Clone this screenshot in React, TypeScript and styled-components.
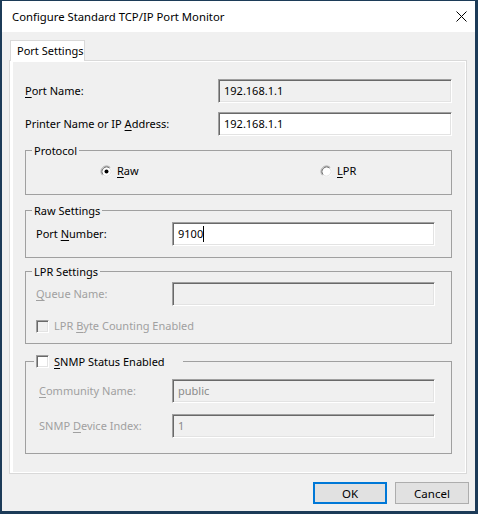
import styled, { createGlobalStyle } from "styled-components";

const GlobalStyle = createGlobalStyle`
  html, body {
    margin: 0;
    padding: 0;
    background: #1c3b58;
  }
  body {
    font-family: "Noto Sans", "Liberation Sans", sans-serif;
    font-size: 11px;
    color: #000;
  }
  * { box-sizing: border-box; }
`;

const Screen = styled.div`
  width: 478px;
  height: 514px;
  padding: 1px 3px 3px 2px;
  background: #1c3b58;
`;

const Window = styled.div`
  width: 100%;
  height: 100%;
  display: flex;
  flex-direction: column;
  background: #f0f0f0;
`;

const TitleBar = styled.div`
  height: 31px;
  flex: none;
  background: #fff;
  display: flex;
  align-items: center;
  justify-content: space-between;
  padding: 0 8px 0 10px;
`;

const Title = styled.span`
  font-size: 11.3px;
  line-height: 16px;
`;

const Client = styled.div`
  flex: 1;
  display: flex;
  flex-direction: column;
  padding: 8px 8px 0 7px;
`;

const TabStrip = styled.div`
  display: flex;
  height: 20px;
`;

const Tab = styled.div`
  position: relative;
  z-index: 1;
  width: 75px;
  height: 21px;
  margin-left: 1px;
  padding: 2px 0 0 6px;
  background: #fff;
  border: 1px solid #d9d9d9;
  border-bottom: none;
  line-height: 16px;
  white-space: nowrap;
`;

const Panel = styled.div`
  height: 414px;
  border: 1px solid #d9d9d9;
  background: #fff;
  padding: 1px 1px 1px 3px;
  display: flex;
`;

const Page = styled.div`
  flex: 1;
  background: #f0f0f0;
  padding: 17px 13px 0 12px;
  display: flex;
  flex-direction: column;
`;

const FieldRow = styled.div<{ $gap?: number; $labelWidth?: number }>`
  display: flex;
  align-items: center;
  margin-top: ${(p) => p.$gap ?? 0}px;
  height: 24px;

  & > label {
    width: ${(p) => p.$labelWidth ?? 193}px;
    flex: none;
  }
`;

const Label = styled.label<{ $disabled?: boolean }>`
  line-height: 16px;
  white-space: nowrap;
  color: ${(p) => (p.$disabled ? "#a0a0a0" : "#000")};
`;

const Key = styled.span`
  text-decoration: underline;
  text-underline-offset: 2px;
`;

const TextBox = styled.div<{ $readOnly?: boolean; $width?: number; $dim?: boolean }>`
  width: ${(p) => p.$width ?? 234}px;
  height: 24px;
  flex: none;
  display: flex;
  align-items: center;
  padding-left: 5px;
  background: ${(p) => (p.$readOnly ? "#f0f0f0" : "#fff")};
  color: ${(p) => (p.$dim ? "#8a8a8a" : "#000")};
  border: 1px solid;
  border-color: #a0a0a0 #fff #fff #a0a0a0;
  box-shadow: inset 1px 1px 0 #696969, inset -1px -1px 0 #e3e3e3;
  line-height: 16px;
`;

const Caret = styled.span`
  display: inline-block;
  width: 1px;
  height: 16px;
  background: #000;
`;

const Group = styled.fieldset<{ $gap: number }>`
  margin: ${(p) => p.$gap}px 0 0 0;
  padding: 0;
  min-inline-size: 0;
  border: 1px solid #a0a0a0;
`;

const Legend = styled.legend<{ $padRight?: number; $offset?: number }>`
  margin-left: ${(p) => p.$offset ?? 6}px;
  padding: 0 ${(p) => p.$padRight ?? 2}px 0 2px;
  line-height: 15px;
  height: 15px;
  display: flex;
  align-items: center;
  gap: 5px;
`;

const GroupBody = styled.div<{ $pad: string }>`
  padding: ${(p) => p.$pad};
  display: flex;
  flex-direction: column;
`;

const RadioRow = styled.div`
  display: grid;
  grid-template-columns: 220px 1fr;
  height: 16px;
  align-items: center;
`;

const Choice = styled.div`
  display: flex;
  align-items: center;
  gap: 4px;
  line-height: 16px;
`;

const CheckRow = styled.div<{ $gap?: number }>`
  display: flex;
  align-items: center;
  gap: 5px;
  height: 16px;
  margin-top: ${(p) => p.$gap ?? 0}px;
`;

const Box = styled.span<{ $disabled?: boolean }>`
  width: 13px;
  height: 13px;
  flex: none;
  background: ${(p) => (p.$disabled ? "#f0f0f0" : "#fff")};
  border: 1px solid;
  border-color: #a0a0a0 #fff #fff #a0a0a0;
  box-shadow: inset 1px 1px 0 #696969, inset -1px -1px 0 #e3e3e3;
`;

const ButtonRow = styled.div`
  display: flex;
  justify-content: flex-end;
  gap: 8px;
  margin: 8px -2px 0 0;
`;

const Button = styled.button<{ $default?: boolean }>`
  width: 74px;
  height: 22px;
  padding: 0;
  font: inherit;
  font-size: 11.5px;
  color: #000;
  background: #e1e1e1;
  border: ${(p) => (p.$default ? "2px solid #0078d7" : "1px solid #adadad")};
`;

const Radio = ({ checked }: { checked?: boolean }) => (
  <svg width="13" height="13" viewBox="0 0 13 13">
    <circle cx="6.5" cy="6.5" r="5.5" fill="#fff" />
    <path d="M2.61 10.39 A5.5 5.5 0 0 1 10.39 2.61" fill="none" stroke="#a0a0a0" />
    <path d="M10.39 2.61 A5.5 5.5 0 0 1 2.61 10.39" fill="none" stroke="#f4f4f4" />
    <path d="M3.32 9.68 A4.5 4.5 0 0 1 9.68 3.32" fill="none" stroke="#696969" />
    <path d="M9.68 3.32 A4.5 4.5 0 0 1 3.32 9.68" fill="none" stroke="#e3e3e3" />
    {checked && <circle cx="6.5" cy="6.5" r="2" fill="#000" />}
  </svg>
);

const CloseIcon = () => (
  <svg width="11" height="11" viewBox="0 0 11 11">
    <path d="M0.5 0.5 L10.5 10.5 M10.5 0.5 L0.5 10.5" stroke="#000" strokeWidth="1" />
  </svg>
);

export default function App() {
  return (
    <Screen>
      <GlobalStyle />
      <Window>
        <TitleBar>
          <Title>Configure Standard TCP/IP Port Monitor</Title>
          <CloseIcon />
        </TitleBar>
        <Client>
          <TabStrip>
            <Tab>Port Settings</Tab>
          </TabStrip>
          <Panel>
            <Page>
              <FieldRow>
                <Label><Key>P</Key>ort Name:</Label>
                <TextBox $readOnly>192.168.1.1</TextBox>
              </FieldRow>
              <FieldRow $gap={9}>
                <Label>Printer Name or IP <Key>A</Key>ddress:</Label>
                <TextBox>192.168.1.1</TextBox>
              </FieldRow>

              <Group $gap={7}>
                <Legend>Protocol</Legend>
                <GroupBody $pad="5px 0 15px 74px">
                  <RadioRow>
                    <Choice>
                      <Radio checked />
                      <span><Key>R</Key>aw</span>
                    </Choice>
                    <Choice>
                      <Radio />
                      <span><Key>L</Key>PR</span>
                    </Choice>
                  </RadioRow>
                </GroupBody>
              </Group>

              <Group $gap={8}>
                <Legend>Raw Settings</Legend>
                <GroupBody $pad="4px 15px 11px 10px">
                  <FieldRow $labelWidth={136}>
                    <Label>Port <Key>N</Key>umber:</Label>
                    <TextBox $width={263}>
                      9100
                      <Caret />
                    </TextBox>
                  </FieldRow>
                </GroupBody>
              </Group>

              <Group $gap={6}>
                <Legend>LPR Settings</Legend>
                <GroupBody $pad="3px 15px 9px 10px">
                  <FieldRow $labelWidth={136}>
                    <Label $disabled><Key>Q</Key>ueue Name:</Label>
                    <TextBox $readOnly $width={263} />
                  </FieldRow>
                  <CheckRow $gap={12}>
                    <Box $disabled />
                    <Label $disabled>LPR <Key>B</Key>yte Counting Enabled</Label>
                  </CheckRow>
                </GroupBody>
              </Group>

              <Group $gap={10}>
                <Legend $offset={8} $padRight={18}>
                  <Box />
                  <Label><Key>S</Key>NMP Status Enabled</Label>
                </Legend>
                <GroupBody $pad="10px 15px 15px 13px">
                  <FieldRow $labelWidth={133}>
                    <Label $disabled><Key>C</Key>ommunity Name:</Label>
                    <TextBox $readOnly $dim $width={263}>public</TextBox>
                  </FieldRow>
                  <FieldRow $gap={11} $labelWidth={133}>
                    <Label $disabled>SNMP <Key>D</Key>evice Index:</Label>
                    <TextBox $readOnly $dim $width={263}>1</TextBox>
                  </FieldRow>
                </GroupBody>
              </Group>
            </Page>
          </Panel>
          <ButtonRow>
            <Button $default>OK</Button>
            <Button>Cancel</Button>
          </ButtonRow>
        </Client>
      </Window>
    </Screen>
  );
}
